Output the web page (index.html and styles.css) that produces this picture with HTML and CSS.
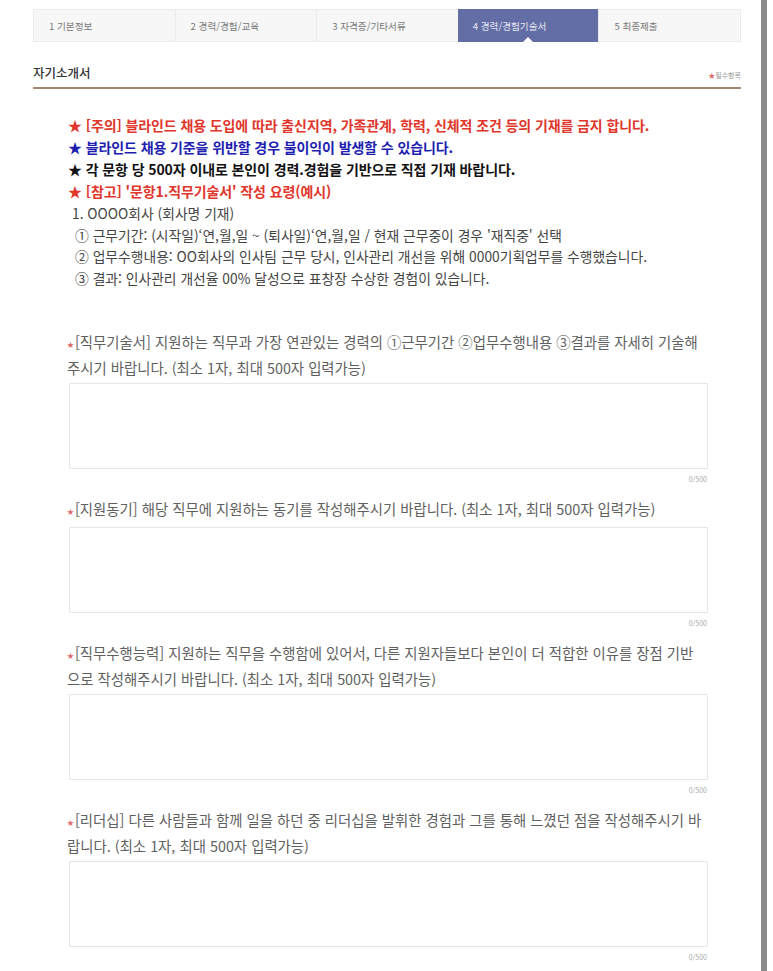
FILE: index.html
```html
<!DOCTYPE html>
<html lang="ko">
<head>
<meta charset="utf-8">
<title>자기소개서</title>
<link rel="stylesheet" href="styles.css">
</head>
<body>
<div class="wrap">
  <main class="main">
    <ul class="steps">
      <li class="step">1 기본정보</li>
      <li class="step">2 경력/경험/교육</li>
      <li class="step">3 자격증/기타서류</li>
      <li class="step active">4 경력/경험기술서</li>
      <li class="step">5 최종제출</li>
    </ul>

    <div class="section-head">
      <h2 class="section-title">자기소개서</h2>
      <span class="req-note"><span class="req-star">★</span>필수항목</span>
    </div>

    <div class="content">
      <div class="notes">
        <p class="note bold red">★ [주의] 블라인드 채용 도입에 따라 출신지역, 가족관계, 학력, 신체적 조건 등의 기재를 금지 합니다.</p>
        <p class="note bold blue">★ 블라인드 채용 기준을 위반할 경우 불이익이 발생할 수 있습니다.</p>
        <p class="note bold black">★ 각 문항 당 500자 이내로 본인이 경력.경험을 기반으로 직접 기재 바랍니다.</p>
        <p class="note bold red">★ [참고] '문항1.직무기술서' 작성 요령(예시)</p>
        <p class="note plain lv1">1. OOOO회사 (회사명 기재)</p>
        <p class="note plain lv2">① 근무기간: (시작일)‘연,월,일 ~ (퇴사일)‘연,월,일 / 현재 근무중이 경우 '재직중' 선택</p>
        <p class="note plain lv2">② 업무수행내용: OO회사의 인사팀 근무 당시, 인사관리 개선을 위해 0000기획업무를 수행했습니다.</p>
        <p class="note plain lv2">③ 결과: 인사관리 개선율 00% 달성으로 표창장 수상한 경험이 있습니다.</p>
      </div>

      <div class="questions">
        <div class="q">
          <p class="q-label"><span class="ast">★</span>[직무기술서] 지원하는 직무과 가장 연관있는 경력의 ①근무기간 ②업무수행내용 ③결과를 자세히 기술해주시기 바랍니다. (최소 1자, 최대 500자 입력가능)</p>
          <textarea class="q-box"></textarea>
          <div class="q-count">0/500</div>
        </div>
        <div class="q">
          <p class="q-label"><span class="ast">★</span>[지원동기] 해당 직무에 지원하는 동기를 작성해주시기 바랍니다. (최소 1자, 최대 500자 입력가능)</p>
          <textarea class="q-box"></textarea>
          <div class="q-count">0/500</div>
        </div>
        <div class="q">
          <p class="q-label"><span class="ast">★</span>[직무수행능력] 지원하는 직무을 수행함에 있어서, 다른 지원자들보다 본인이 더 적합한 이유를 장점 기반<span class="nb">으로</span> 작성해주시기 바랍니다. (최소 1자, 최대 500자 입력가능)</p>
          <textarea class="q-box"></textarea>
          <div class="q-count">0/500</div>
        </div>
        <div class="q">
          <p class="q-label"><span class="ast">★</span>[리더십] 다른 사람들과 함께 일을 하던 중 리더십을 발휘한 경험과 그를 통해 느꼈던 점을 작성해주시기 바랍니다. (최소 1자, 최대 500자 입력가능)</p>
          <textarea class="q-box"></textarea>
          <div class="q-count">0/500</div>
        </div>
      </div>
    </div>
  </main>
  <div class="scrollbar"></div>
</div>
</body>
</html>
```

FILE: styles.css
```css
* { box-sizing: border-box; }
html, body { margin: 0; padding: 0; background: #fff; }
body {
  font-family: "Noto Sans CJK KR", "Noto Sans", sans-serif;
  color: #333;
  height: 971px;
  overflow: hidden;
}
.wrap {
  display: flex;
  min-height: 100vh;
}
.main {
  flex: 1;
  padding: 9px 20px 0 33px;
}
.scrollbar {
  width: 6px;
  margin-right: 6px;
  background: #8a8a8a;
  align-self: stretch;
}

/* steps */
.steps {
  list-style: none;
  margin: 0;
  padding: 0;
  display: flex;
  height: 33px;
  background: #f7f7f7;
  border: 1px solid #ebebeb;
  width: 708px;
}
.step {
  flex: 1;
  position: relative;
  display: flex;
  align-items: center;
  padding-left: 15px;
  font-size: 9.6px;
  color: #777;
  border-left: 1px solid #ebebeb;
}
.step:first-child { border-left: none; }
.step.active {
  background: #646ea6;
  color: #e6e8f3;
  margin: -1px 0;
  border-left: none;
}
.step.active::after {
  content: "";
  position: absolute;
  left: 50%;
  bottom: 0;
  margin-left: -5px;
  border-left: 5px solid transparent;
  border-right: 5px solid transparent;
  border-bottom: 5px solid #fff;
}

/* section head */
.section-head {
  width: 708px;
  display: flex;
  justify-content: space-between;
  align-items: flex-end;
  margin-top: 22px;
  padding-bottom: 5px;
  border-bottom: 2px solid #a48773;
}
.section-title {
  margin: 0;
  font-size: 12.5px;
  font-weight: 500;
  line-height: 18px;
  color: #333;
}
.req-note {
  font-size: 7px;
  color: #999;
  line-height: 10px;
  padding-bottom: 2px;
}
.req-star { color: #d96a6a; }

/* content */
.content {
  width: 708px;
  padding: 26px 34px 0 35px;
}
.notes { margin: 0; }
.note {
  margin: 0;
  line-height: 21.9px;
  white-space: nowrap;
}
.note.bold {
  font-weight: 700;
  font-size: 14px;
  letter-spacing: -0.1px;
}
.red { color: #e0362b; }
.blue { color: #1e1eb0; }
.black { color: #111; }
.note.plain {
  font-size: 13.8px;
  color: #444;
}
.lv1 { padding-left: 4px; }
.lv2 { padding-left: 7px; }

.questions {
  margin-top: 40px;
}
.q { margin-bottom: 12px; }
.q-label {
  margin: 0 0 4px -1px;
  font-size: 14.4px;
  line-height: 23px;
  color: #5f5f5f;
  font-weight: 400;
}
.nb { white-space: nowrap; }
.ast {
  color: #e06a6a;
  font-size: 7px;
  vertical-align: 1px;
  margin-right: 1px;
}
.q-box {
  display: block;
  width: 100%;
  height: 86px;
  border: 1px solid #e6e6e6;
  border-radius: 1px;
  resize: none;
  background: #fff;
  margin: 0 0 0 1px;
  font-family: inherit;
}
.q-count {
  margin-top: 4px;
  text-align: right;
  font-size: 7px;
  line-height: 12px;
  color: #aaa;
}
```
